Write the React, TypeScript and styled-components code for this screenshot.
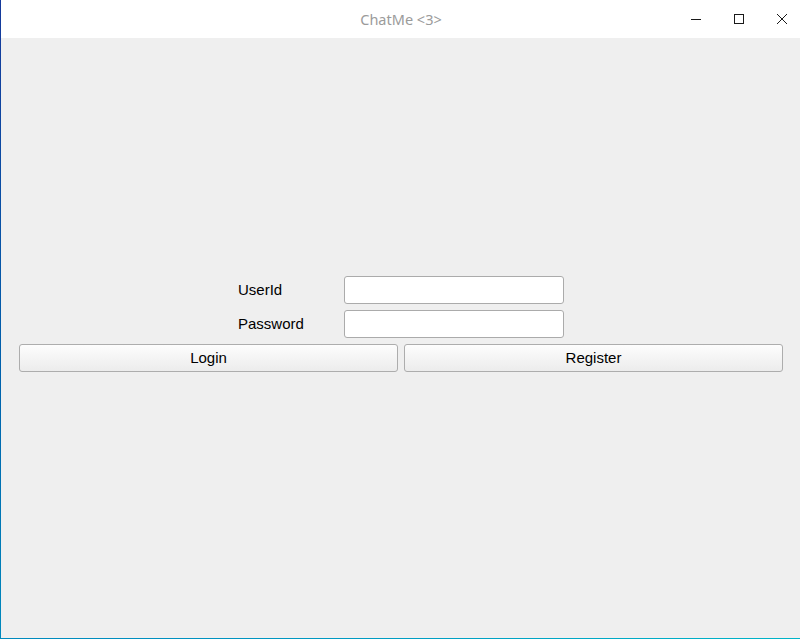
import React from "react";
import styled, { createGlobalStyle } from "styled-components";

const GlobalStyle = createGlobalStyle`
  html, body {
    margin: 0;
    padding: 0;
    overflow: hidden;
    background: #ffffff;
  }
`;

export default function App() {
  return (
    <>
      <GlobalStyle />
      <WindowFrame>
        <Window>
          <TitleBar>
            <Title>ChatMe &lt;3&gt;</Title>
            <WindowControls>
              <ControlButton aria-label="Minimize">
                <svg width="10" height="10" viewBox="0 0 10 10">
                  <line x1="0" y1="5.5" x2="10" y2="5.5" stroke="#1a1a1a" strokeWidth="1" />
                </svg>
              </ControlButton>
              <ControlButton aria-label="Maximize">
                <svg width="10" height="10" viewBox="0 0 10 10">
                  <rect x="0.5" y="0.5" width="9" height="9" fill="none" stroke="#1a1a1a" strokeWidth="1" />
                </svg>
              </ControlButton>
              <ControlButton aria-label="Close">
                <svg width="10" height="10" viewBox="0 0 10 10">
                  <path d="M0 0 L10 10 M10 0 L0 10" stroke="#1a1a1a" strokeWidth="1" />
                </svg>
              </ControlButton>
            </WindowControls>
          </TitleBar>
          <Content>
            <LoginForm>
              <Field>
                <Label>UserId</Label>
                <TextInput type="text" />
              </Field>
              <Field>
                <Label>Password</Label>
                <TextInput type="password" />
              </Field>
            </LoginForm>
            <ButtonRow>
              <PushButton>Login</PushButton>
              <PushButton>Register</PushButton>
            </ButtonRow>
          </Content>
        </Window>
      </WindowFrame>
    </>
  );
}

// thin accent border of the window, blue fading to teal
const WindowFrame = styled.div`
  width: 801px;
  height: 639px;
  box-sizing: border-box;
  padding: 0 0 1px 1px;
  background: linear-gradient(165deg, #15399b 0%, #0063ad 45%, #0090c0 80%, #00b4c8 100%);
`;

const Window = styled.div`
  height: 100%;
  display: flex;
  flex-direction: column;
  background: #efefef;
`;

const TitleBar = styled.div`
  height: 38px;
  flex-shrink: 0;
  position: relative;
  display: flex;
  align-items: center;
  justify-content: flex-end;
  background: #ffffff;
`;

const Title = styled.div`
  position: absolute;
  left: 0;
  right: 0;
  top: 0;
  line-height: 38px;
  text-align: center;
  font-family: "Noto Sans", sans-serif;
  font-size: 14.5px;
  color: #9b9b9b;
`;

const WindowControls = styled.div`
  display: flex;
  height: 100%;
  margin-right: -2px;
  position: relative;
`;

const ControlButton = styled.button`
  width: 43px;
  height: 100%;
  border: none;
  padding: 0;
  background: transparent;
  display: flex;
  align-items: center;
  justify-content: center;
`;

const Content = styled.div`
  flex: 1;
  display: flex;
  flex-direction: column;
  padding: 238px 18px 0 18px;
  gap: 6px;
  font-family: "Liberation Sans", Arial, sans-serif;
  font-size: 15px;
  color: #000000;
`;

const LoginForm = styled.div`
  align-self: center;
  display: flex;
  flex-direction: column;
  gap: 6px;
`;

const Field = styled.div`
  display: grid;
  grid-template-columns: 106px 220px;
  align-items: center;
`;

const Label = styled.span`
  line-height: 28px;
`;

const TextInput = styled.input`
  box-sizing: border-box;
  width: 220px;
  height: 28px;
  margin: 0;
  border: 1px solid #ababab;
  border-radius: 3px;
  background: #ffffff;
  outline: none;
`;

const ButtonRow = styled.div`
  display: grid;
  grid-template-columns: 1fr 1fr;
  gap: 6px;
`;

const PushButton = styled.button`
  box-sizing: border-box;
  height: 28px;
  border: 1px solid #adadad;
  border-radius: 3px;
  background: linear-gradient(to bottom, #fdfdfd, #ececec);
  font-family: "Liberation Sans", Arial, sans-serif;
  font-size: 15px;
  color: #000000;
  padding: 0 0 2px 0;
`;
